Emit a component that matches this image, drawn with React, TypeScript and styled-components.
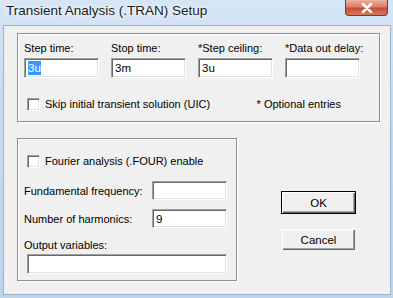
import styled, { createGlobalStyle } from 'styled-components';

const GlobalStyle = createGlobalStyle`
  html, body {
    margin: 0;
    padding: 0;
    background: #ffffff;
  }
  body {
    font-family: 'Liberation Sans', Arial, sans-serif;
  }
`;

const StyledWindow = styled.div`
  width: 393px;
  height: 298px;
  box-sizing: border-box;
  display: flex;
  flex-direction: column;
  background: linear-gradient(180deg, #d6e6f6 0%, #c8dcf1 30%, #bcd4ec 100%);
  overflow: hidden;
`;

const StyledTitleBar = styled.div`
  height: 25px;
  display: flex;
  align-items: flex-start;
  justify-content: space-between;
  padding: 0 5px 0 6px;
  box-sizing: border-box;
`;

const StyledTitle = styled.span`
  font-family: 'Liberation Sans', Arial, sans-serif;
  font-size: 13.5px;
  line-height: 22px;
  color: #1a1a1a;
  text-shadow: 0 0 6px #ffffff, 0 0 3px #ffffff;
`;

const StyledClose = styled.div`
  width: 43px;
  height: 16px;
  box-sizing: border-box;
  border: 1px solid #7a3a30;
  border-top: none;
  border-radius: 0 0 4px 4px;
  background: linear-gradient(180deg, #eab0a2 0%, #dc7f6b 45%, #c64d35 55%, #d67a60 100%);
  display: flex;
  align-items: center;
  justify-content: center;
`;

const StyledClient = styled.div`
  margin: 0 2px 3px 3px;
  flex: 1;
  background: #f0f0f0;
  border: 1px solid #9fb3c8;
  box-sizing: border-box;
  padding: 7px 0 0 13px;
  display: flex;
  flex-direction: column;
  font-size: 11px;
  color: #000;
`;

const StyledGroup = styled.div<{ $width: number; $height: number }>`
  width: ${(p) => p.$width}px;
  height: ${(p) => p.$height}px;
  box-sizing: border-box;
  border: 1px solid #8e8e8e;
  box-shadow: inset 1px 1px 0 #ffffff, 1px 1px 0 #ffffff;
`;

const StyledStepGroup = styled(StyledGroup)`
  padding: 7px 0 0 6px;
`;

const StyledFieldGrid = styled.div`
  display: grid;
  grid-template-columns: repeat(4, 75px);
  column-gap: 12px;
  row-gap: 3px;
`;

const StyledLabel = styled.span`
  line-height: 14px;
  white-space: nowrap;
`;

const StyledInput = styled.div<{ $width?: number; $height?: number }>`
  width: ${(p) => p.$width ?? 75}px;
  height: ${(p) => p.$height ?? 20}px;
  box-sizing: border-box;
  background: #ffffff;
  border-top: 1px solid #a0a0a0;
  border-left: 1px solid #a0a0a0;
  border-right: 1px solid #ffffff;
  border-bottom: 1px solid #ffffff;
  box-shadow: inset 1px 1px 0 #696969, inset -1px -1px 0 #e3e3e3;
  padding: 0 3px;
  display: flex;
  align-items: center;
  line-height: 14px;
  font-size: 11.5px;
`;

const StyledSelection = styled.span`
  background: #3399ff;
  color: #ffffff;
`;

const StyledCheckRow = styled.div<{ $top: number; $left: number }>`
  display: flex;
  align-items: center;
  gap: 5px;
  margin: ${(p) => p.$top}px 0 0 ${(p) => p.$left}px;
  line-height: 14px;
`;

const StyledCheckbox = styled.div`
  width: 13px;
  height: 13px;
  box-sizing: border-box;
  background: #ffffff;
  border-top: 1px solid #a0a0a0;
  border-left: 1px solid #a0a0a0;
  border-right: 1px solid #ffffff;
  border-bottom: 1px solid #ffffff;
  box-shadow: inset 1px 1px 0 #696969, inset -1px -1px 0 #e3e3e3;
`;

const StyledCheckLine = styled.div`
  display: flex;
  align-items: center;
  justify-content: space-between;
  padding-right: 38px;
`;

const StyledNote = styled(StyledLabel)`
  margin-top: 19px;
`;

const StyledBottomRow = styled.div`
  display: flex;
  margin-top: 16px;
`;

const StyledFourierGroup = styled(StyledGroup)`
  padding: 0 0 0 6px;
  display: flex;
  flex-direction: column;
`;

const StyledFormRow = styled.div<{ $top: number }>`
  display: flex;
  align-items: center;
  justify-content: space-between;
  width: 203px;
  margin-top: ${(p) => p.$top}px;
`;

const StyledOutputLabel = styled(StyledLabel)`
  margin-top: 10px;
`;

const StyledOutputInput = styled(StyledInput)`
  margin: 2px 0 0 3px;
`;

const StyledButtons = styled.div`
  display: flex;
  flex-direction: column;
  gap: 14px;
  padding: 53px 0 0 44px;
`;

const StyledButton = styled.div<{ $default?: boolean }>`
  width: 75px;
  height: 23px;
  box-sizing: border-box;
  background: #f0f0f0;
  border: 1px solid ${(p) => (p.$default ? '#000000' : '#f0f0f0')};
  box-shadow: inset 1px 1px 0 #ffffff, inset -1px -1px 0 #696969,
    inset -2px -2px 0 #a0a0a0;
  display: flex;
  align-items: center;
  justify-content: center;
  font-size: 11.5px;
`;

const CloseIcon = () => (
  <svg width="12" height="10" viewBox="0 0 12 10">
    <path d="M2 1 L10 9 M10 1 L2 9" stroke="#ffffff" strokeWidth="2.6" strokeLinecap="round" />
  </svg>
);

const App = () => {
  return (
    <>
      <GlobalStyle />
      <StyledWindow>
        <StyledTitleBar>
          <StyledTitle>Transient Analysis (.TRAN) Setup</StyledTitle>
          <StyledClose>
            <CloseIcon />
          </StyledClose>
        </StyledTitleBar>
        <StyledClient>
          <StyledStepGroup $width={363} $height={89}>
            <StyledFieldGrid>
              <StyledLabel>Step time:</StyledLabel>
              <StyledLabel>Stop time:</StyledLabel>
              <StyledLabel>*Step ceiling:</StyledLabel>
              <StyledLabel>*Data out delay:</StyledLabel>
              <StyledInput>
                <StyledSelection>3u</StyledSelection>
              </StyledInput>
              <StyledInput>3m</StyledInput>
              <StyledInput>3u</StyledInput>
              <StyledInput />
            </StyledFieldGrid>
            <StyledCheckLine>
              <StyledCheckRow $top={19} $left={3}>
                <StyledCheckbox />
                <span>Skip initial transient solution (UIC)</span>
              </StyledCheckRow>
              <StyledNote>* Optional entries</StyledNote>
            </StyledCheckLine>
          </StyledStepGroup>
          <StyledBottomRow>
            <StyledFourierGroup $width={220} $height={143}>
              <StyledCheckRow $top={15} $left={3}>
                <StyledCheckbox />
                <span>Fourier analysis (.FOUR) enable</span>
              </StyledCheckRow>
              <StyledFormRow $top={13}>
                <StyledLabel>Fundamental frequency:</StyledLabel>
                <StyledInput $height={19} />
              </StyledFormRow>
              <StyledFormRow $top={9}>
                <StyledLabel>Number of harmonics:</StyledLabel>
                <StyledInput $height={19}>9</StyledInput>
              </StyledFormRow>
              <StyledOutputLabel>Output variables:</StyledOutputLabel>
              <StyledOutputInput $width={200} />
            </StyledFourierGroup>
            <StyledButtons>
              <StyledButton $default>OK</StyledButton>
              <StyledButton>Cancel</StyledButton>
            </StyledButtons>
          </StyledBottomRow>
        </StyledClient>
      </StyledWindow>
    </>
  );
};

export default App;
